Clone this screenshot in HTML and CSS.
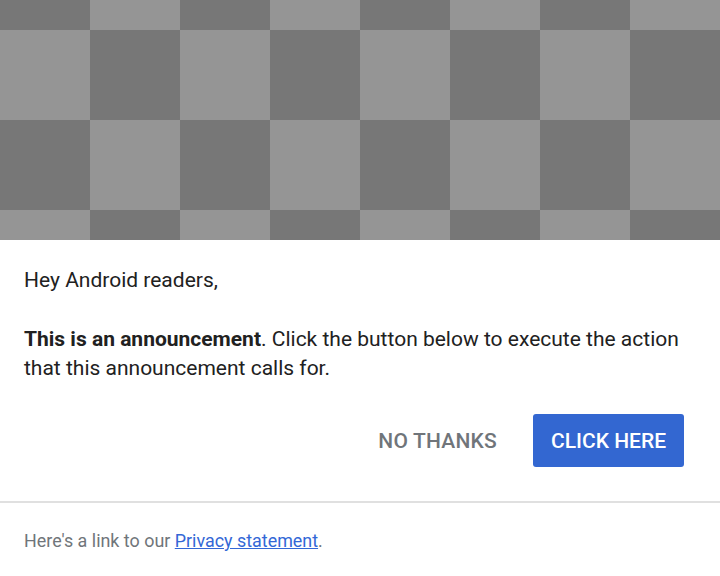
FILE: index.html
```html
<!DOCTYPE html>
<html>
<head>
<meta charset="utf-8">
<link rel="stylesheet" href="styles.css">
</head>
<body>
<div class="hero"></div>
<div class="content">
  <p class="greeting">Hey Android readers,</p>
  <p class="message"><strong>This is an announcement</strong>. Click the button below to execute the action that this announcement calls for.</p>
  <div class="actions">
    <button class="btn btn-text">No thanks</button>
    <button class="btn btn-primary">Click here</button>
  </div>
</div>
<div class="footer">Here's a link to our <a href="#">Privacy statement</a>.</div>
</body>
</html>
```
FILE: styles.css
```css
html, body {
  margin: 0;
  padding: 0;
  background: #ffffff;
}
body {
  font-family: Roboto, "Liberation Sans", sans-serif;
  width: 720px;
  height: 576px;
  overflow: hidden;
}
.hero {
  height: 240px;
  background-image: conic-gradient(#959595 0 25%, #777777 0 50%, #959595 0 75%, #777777 0);
  background-size: 180px 180px;
  background-position: 0 -60px;
}
.content {
  padding: 26px 36px 34px 24px;
  border-bottom: 2px solid #e0e0e0;
}
.greeting, .message {
  margin: 0;
  font-size: 21px;
  line-height: 29px;
  color: #212121;
}
.message {
  margin-top: 30px;
}
.message strong {
  font-weight: 700;
}
.actions {
  display: flex;
  justify-content: flex-end;
  gap: 18px;
  margin-top: 31px;
}
.btn {
  font-family: Roboto, "Liberation Sans", sans-serif;
  font-size: 21px;
  font-weight: 500;
  text-transform: uppercase;
  height: 53px;
  padding: 0 18px;
  border: none;
  border-radius: 3px;
  background: transparent;
  cursor: pointer;
}
.btn-text {
  color: #70757a;
  letter-spacing: 0.2px;
}
.btn-primary {
  background: #3367d1;
  color: #ffffff;
}
.footer {
  padding: 26px 24px;
  font-size: 17.9px;
  line-height: 24px;
  color: #70757a;
}
.footer a {
  color: #3367d6;
  text-decoration: underline;
}
```
